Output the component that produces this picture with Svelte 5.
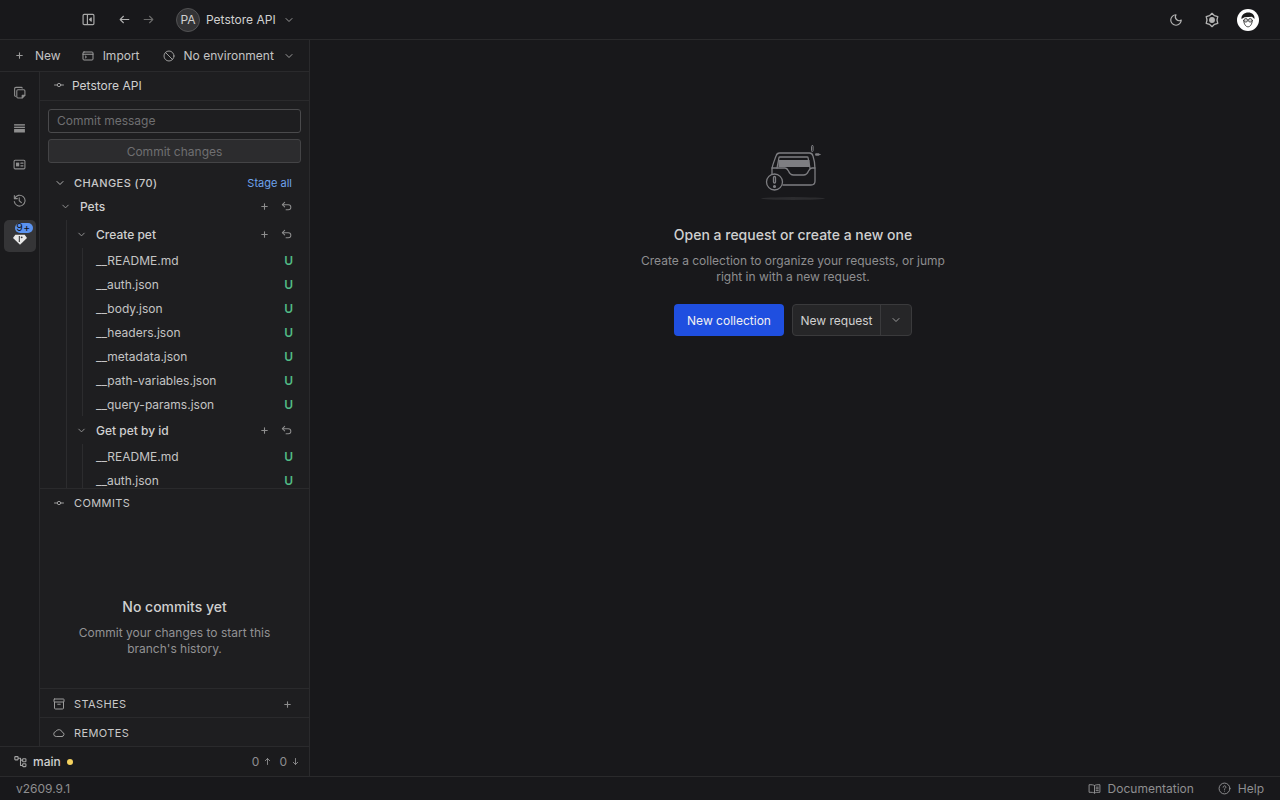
<script>
  const createPetFiles = [
    '__README.md',
    '__auth.json',
    '__body.json',
    '__headers.json',
    '__metadata.json',
    '__path-variables.json',
    '__query-params.json'
  ];
  const getPetFiles = ['__README.md', '__auth.json'];
</script>

{#snippet chevron(cls = 'chev')}
  <svg class={cls} viewBox="0 0 24 24" fill="none" stroke="currentColor" stroke-width="2" stroke-linecap="round" stroke-linejoin="round"><path d="M6 9l6 6 6-6" /></svg>
{/snippet}

{#snippet plus()}
  <svg class="act" viewBox="0 0 24 24" fill="none" stroke="currentColor" stroke-width="2.400" stroke-linecap="round"><path d="M12 6v12M6 12h12" /></svg>
{/snippet}

{#snippet undo()}
  <svg class="act" viewBox="0 0 24 24" fill="none" stroke="currentColor" stroke-width="2.200" stroke-linecap="round" stroke-linejoin="round"><path d="M8 13L3 8l5-5" /><path d="M3 8h13a5 5 0 0 1 0 11h-5" /></svg>
{/snippet}

{#snippet commitIcon()}
  <svg class="sec-icon" viewBox="0 0 24 24" fill="none" stroke="currentColor" stroke-width="2" stroke-linecap="round"><circle cx="12" cy="12" r="3.400" /><path d="M3 12h5.600M15.400 12H21" /></svg>
{/snippet}

<div class="app">
  <header class="topbar">
    <svg class="ic top-toggle" viewBox="0 0 24 24" fill="none" stroke="currentColor" stroke-width="2.200" stroke-linecap="round" stroke-linejoin="round"><rect x="2" y="2.500" width="20" height="19" rx="2" /><path d="M10 3v18" /><path d="M17 9l-3 3 3 3z" fill="currentColor" /></svg>
    <svg class="ic nav-back" viewBox="0 0 24 24" fill="none" stroke="currentColor" stroke-width="2" stroke-linecap="round" stroke-linejoin="round"><path d="M20 12H4M10 6l-6 6 6 6" /></svg>
    <svg class="ic nav-fwd" viewBox="0 0 24 24" fill="none" stroke="currentColor" stroke-width="2" stroke-linecap="round" stroke-linejoin="round"><path d="M4 12h16M14 6l6 6-6 6" /></svg>
    <span class="avatar">PA</span>
    <span class="ws-name">Petstore API</span>
    {@render chevron('chev ws-chev')}
    <div class="top-right">
      <svg class="ic" viewBox="0 0 24 24" fill="none" stroke="currentColor" stroke-width="2" stroke-linecap="round" stroke-linejoin="round"><path d="M12 3a6.500 6.500 0 0 0 9 9 9 9 0 1 1-9-9z" /></svg>
      <svg class="ic gear" viewBox="0 0 24 24" fill="none" stroke="currentColor" stroke-width="2" stroke-linejoin="round"><path d="M12 2l3.750 3.500 4.910 1.500-1.160 5 1.160 5-4.910 1.500L12 22l-3.750-3.500-4.910-1.500 1.160-5-1.160-5 4.910-1.500z" /><circle cx="12" cy="12" r="3.400" fill="currentColor" /></svg>
      <span class="user">
        <svg viewBox="0 0 22 22">
          <circle cx="11" cy="11" r="11" fill="#fff" />
          <path d="M4.500 10c-.5-4 3-6.500 6.800-6.500S18 6 17.500 10l-2.500-2.200-7.500.4z" fill="#1c1c1c" />
          <path d="M6.500 11c.8 5 2.500 6.800 4.500 6.800s3.700-1.800 4.500-6.800" fill="none" stroke="#444" stroke-width="1" />
          <circle cx="8.800" cy="11.300" r="1.800" fill="#ccc" stroke="#333" stroke-width=".8" />
          <circle cx="13.200" cy="11.300" r="1.800" fill="#ccc" stroke="#333" stroke-width=".8" />
        </svg>
      </span>
    </div>
  </header>

  <div class="body">
    <aside class="sidebar">
      <div class="toolbar">
        <span class="tool tool-new">
          <svg viewBox="0 0 24 24" fill="none" stroke="currentColor" stroke-width="2.400" stroke-linecap="round"><path d="M12 6v12M6 12h12" /></svg>
          New
        </span>
        <span class="tool tool-import">
          <svg viewBox="0 0 24 24" fill="none" stroke="currentColor" stroke-width="2" stroke-linecap="round" stroke-linejoin="round"><rect x="2" y="4" width="20" height="16" rx="2" /><path d="M2 8.500h20M6.500 12l2.500 2-2.500 2" /></svg>
          Import
        </span>
        <span class="tool tool-env">
          <svg viewBox="0 0 24 24" fill="none" stroke="currentColor" stroke-width="2" stroke-linecap="round"><circle cx="12" cy="12" r="10" /><path d="M5 5l14 14" /></svg>
          No environment
          {@render chevron('chev env-chev')}
        </span>
      </div>

      <div class="main-side">
        <nav class="rail">
          <span class="rail-item">
            <svg viewBox="0 0 24 24" fill="none" stroke="currentColor" stroke-width="2" stroke-linejoin="round"><path d="M17 4.500V4a1.500 1.500 0 0 0-1.500-1.500h-10A2.500 2.500 0 0 0 3 5v12a2 2 0 0 0 2.500 2" /><path d="M7 9a2 2 0 0 1 2-2h11a2 2 0 0 1 2 2v8l-5 5H9a2 2 0 0 1-2-2z" /><path d="M17 22v-5h5z" fill="currentColor" /></svg>
          </span>
          <span class="rail-item">
            <svg viewBox="0 0 24 24" fill="currentColor"><rect x="2" y="4" width="20" height="2.600" /><rect x="2" y="8.600" width="20" height="2.600" /><rect x="2" y="13" width="20" height="6.500" rx=".5" /></svg>
          </span>
          <span class="rail-item">
            <svg viewBox="0 0 24 24" fill="none" stroke="currentColor" stroke-width="2" stroke-linecap="round"><rect x="2" y="4" width="20" height="16" rx="2" /><rect x="5.500" y="8.500" width="6" height="7" fill="currentColor" stroke="none" /><path d="M14.500 9.500h4M14.500 14.500h4" /></svg>
          </span>
          <span class="rail-item">
            <svg viewBox="0 0 24 24" fill="none" stroke="currentColor" stroke-width="2" stroke-linecap="round" stroke-linejoin="round"><path d="M2.500 3v5.500H8" /><path d="M3 8.500A10 10 0 1 1 2.400 14" /><path d="M11.500 7v5.500l4 3.500" /></svg>
          </span>
          <span class="rail-item active">
            <svg class="git" viewBox="0 0 24 24"><path d="M12 22L1.500 12 5 7h14l3.500 5z" fill="#e8e8e8" /><path d="M11 9v9" stroke="#3a3a3a" stroke-width="1.600" /><circle cx="14.500" cy="11" r="1.400" fill="#3a3a3a" /></svg>
            <span class="badge">9+</span>
          </span>
        </nav>

        <div class="panel">
          <div class="panel-head">
            {@render commitIcon()}
            <span>Petstore API</span>
          </div>

          <div class="commit-box">
            <div class="commit-input">Commit message</div>
            <div class="commit-btn">Commit changes</div>
          </div>

          <div class="changes">
            <div class="changes-head">
              {@render chevron('chev changes-chev')}
              <span class="sec-title bold">CHANGES (70)</span>
              <span class="stage">Stage all</span>
            </div>
            <div class="tree">
              <div class="row folder lvl0">
                {@render chevron()}
                <span class="name">Pets</span>
                <span class="acts">{@render plus()}{@render undo()}</span>
              </div>
              <div class="guide guide0">
                <div class="row folder lvl1">
                  {@render chevron()}
                  <span class="name">Create pet</span>
                  <span class="acts">{@render plus()}{@render undo()}</span>
                </div>
                <div class="guide guide1">
                  {#each createPetFiles as f}
                    <div class="row file"><span class="fname">{f}</span><span class="u">U</span></div>
                  {/each}
                </div>
                <div class="row folder lvl1">
                  {@render chevron()}
                  <span class="name">Get pet by id</span>
                  <span class="acts">{@render plus()}{@render undo()}</span>
                </div>
                <div class="guide guide1">
                  {#each getPetFiles as f}
                    <div class="row file"><span class="fname">{f}</span><span class="u">U</span></div>
                  {/each}
                </div>
              </div>
            </div>
          </div>

          <div class="commits">
            <div class="sec-head">
              {@render commitIcon()}
              <span class="sec-title">COMMITS</span>
            </div>
            <div class="no-commits">
              <h3>No commits yet</h3>
              <p>Commit your changes to start this branch's history.</p>
            </div>
          </div>

          <div class="sec-head boxed">
            <svg class="sec-icon" viewBox="0 0 24 24" fill="none" stroke="currentColor" stroke-width="2" stroke-linecap="round" stroke-linejoin="round"><rect x="2" y="2" width="20" height="6" rx="1" /><path d="M3 8v12a2 2 0 0 0 2 2h14a2 2 0 0 0 2-2V8M9.500 12.500h5" /></svg>
            <span class="sec-title">STASHES</span>
            <span class="sec-plus">{@render plus()}</span>
          </div>
          <div class="sec-head boxed">
            <svg class="sec-icon" viewBox="0 0 24 24" fill="none" stroke="currentColor" stroke-width="2" stroke-linecap="round" stroke-linejoin="round"><path d="M18 19H6.500a5 5 0 0 1-1-9.900A7 7 0 0 1 18.500 10.500 4.300 4.300 0 0 1 18 19z" /></svg>
            <span class="sec-title">REMOTES</span>
          </div>
        </div>
      </div>

      <div class="branch">
        <svg class="branch-icon" viewBox="0 0 24 24" fill="none" stroke="currentColor" stroke-width="2" stroke-linejoin="round"><rect x="1.500" y="3" width="6" height="6" rx="1" /><rect x="16" y="7" width="6" height="5.500" rx="1" /><rect x="16" y="16" width="6" height="5.500" rx="1" /><path d="M7.500 6H12v13.500h4M12 9.500h4" /></svg>
        <span class="branch-name">main</span>
        <span class="dot"></span>
        <span class="sync">
          0
          <svg viewBox="0 0 24 24" fill="none" stroke="currentColor" stroke-width="2.400" stroke-linecap="round" stroke-linejoin="round"><path d="M12 20V4M6 10l6-6 6 6" /></svg>
          <span class="sync-gap">0</span>
          <svg viewBox="0 0 24 24" fill="none" stroke="currentColor" stroke-width="2.400" stroke-linecap="round" stroke-linejoin="round"><path d="M12 4v16M6 14l6 6 6-6" /></svg>
        </span>
      </div>
    </aside>

    <main class="main">
      <svg class="tray" viewBox="0 0 72 60" fill="none" stroke="#7e7e82" stroke-width="1.300" stroke-linecap="round" stroke-linejoin="round">
        <ellipse cx="36" cy="55.500" rx="32" ry="1.400" fill="#2c2c2f" stroke="none" />
        <path d="M15 32v-6c0-3 3-10 4-13 .6-2 1.500-3 3.500-3h30c2 0 3 1 3.500 3 1 3 2 8 2 13v12c0 2.500-1.500 4-4 4H26" />
        <path d="M15 25h13c2 0 2.500 1 3.500 3 1 2.500 2 4 5 4h10c3 0 4-1.500 5-4 1-2 1.500-3 3.500-3h3" />
        <path d="M20 25l2-10.500c0-.5.500-.5 1-.5h27c.5 0 1 0 1 .5l2 10.500" />
        <rect x="21.500" y="17" width="31" height="7" fill="#7e7e82" stroke="none" />
        <circle cx="17.500" cy="39" r="8" fill="#18181b" />
        <rect x="16.500" y="33.500" width="2" height="6.500" rx="1" />
        <circle cx="17.500" cy="43.500" r=".9" fill="#7e7e82" />
        <rect x="54.500" y="2.500" width="1.600" height="6" rx=".8" stroke-width="1" />
        <ellipse cx="60.500" cy="11.500" rx="2.500" ry=".8" fill="#7e7e82" stroke-width="1" />
      </svg>
      <h2>Open a request or create a new one</h2>
      <p>Create a collection to organize your requests, or jump<br />right in with a new request.</p>
      <div class="actions">
        <button class="primary">New collection</button>
        <div class="split">
          <button class="split-main">New request</button>
          <button class="split-caret">{@render chevron('chev')}</button>
        </div>
      </div>
    </main>
  </div>

  <footer class="footer">
    <span class="version">v2609.9.1</span>
    <span class="foot-link doc">
      <svg viewBox="0 0 24 24" fill="none" stroke="currentColor" stroke-width="1.800" stroke-linecap="round" stroke-linejoin="round"><path d="M12 6.500C10 5 7 5 2 5v14c5 0 8 0 10 1.500 2-1.500 5-1.500 10-1.500V5c-5 0-8 0-10 1.500zM12 6.500v14M15 9.500h4M15 12.500h4M15 15.500h4" /></svg>
      Documentation
    </span>
    <span class="foot-link">
      <svg viewBox="0 0 24 24" fill="none" stroke="currentColor" stroke-width="1.800" stroke-linecap="round" stroke-linejoin="round"><circle cx="12" cy="12" r="10" /><path d="M9.500 9.500a2.500 2.500 0 1 1 3.800 2.100c-.8.500-1.300 1-1.300 2" /><path d="M12 16.800v.1" /></svg>
      Help
    </span>
  </footer>
</div>

<style>
  :global(body) {
    margin: 0;
    background: #18181b;
  }
  .app {
    width: 1280px;
    height: 800px;
    display: flex;
    flex-direction: column;
    overflow: hidden;
    background: #18181b;
    color: #d0d0d0;
    font-family: Inter, "Noto Sans", sans-serif;
    font-size: 12px;
  }
  svg { display: block; flex-shrink: 0; }

  .topbar {
    height: 39px;
    flex-shrink: 0;
    display: flex;
    align-items: center;
    padding-left: 82px;
    border-bottom: 1px solid #2a2a2c;
  }
  .ic { width: 13px; height: 13px; color: #a8a8a8; }
  .nav-back { margin-left: 23px; color: #b0b0b0; }
  .nav-fwd { margin-left: 11px; color: #6a6a6a; }
  .avatar {
    margin-left: 21px;
    margin-right: 6px;
    width: 22px;
    height: 22px;
    border-radius: 50%;
    background: #333335;
    border: 1px solid #525254;
    display: flex;
    align-items: center;
    justify-content: center;
    font-size: 12px;
    color: #cfcfcf;
  }
  .ws-name { color: #d0d0d0; }
  .chev { width: 12px; height: 12px; color: #9a9a9a; }
  :global(.ws-chev) { margin-left: 7px; }
  .top-right {
    margin-left: auto;
    margin-right: 21px;
    display: flex;
    align-items: center;
  }
  .top-right .ic { width: 14px; height: 14px; color: #b4b4b4; }
  .top-right .gear { width: 16px; height: 16px; margin-left: 21px; }
  .user { width: 22px; height: 22px; margin-left: 17px; }
  .user svg { width: 22px; height: 22px; }

  .body { flex: 1; min-height: 0; display: flex; }

  .sidebar {
    width: 309px;
    flex-shrink: 0;
    display: flex;
    flex-direction: column;
    background: #1b1b1d;
    border-right: 1px solid #2a2a2c;
  }
  .toolbar {
    height: 31px;
    flex-shrink: 0;
    display: flex;
    align-items: center;
    border-bottom: 1px solid #2a2a2c;
    color: #c4c4c4;
    white-space: nowrap;
  }
  .tool { display: flex; align-items: center; }
  .tool svg { width: 12px; height: 12px; color: #9c9c9c; }
  .tool-new { margin-left: 14px; gap: 10px; }
  .tool-new svg { width: 11px; height: 11px; }
  .tool-import { margin-left: 21px; gap: 9px; }
  .tool-env { margin-left: 23px; gap: 9px; }

  .main-side { flex: 1; min-height: 0; display: flex; }
  .rail {
    width: 39px;
    flex-shrink: 0;
    border-right: 1px solid #2a2a2c;
    display: flex;
    flex-direction: column;
    align-items: center;
    padding-top: 4px;
    gap: 4px;
  }
  .rail-item {
    width: 32px;
    height: 32px;
    border-radius: 5px;
    display: flex;
    align-items: center;
    justify-content: center;
    color: #8e8e8e;
    position: relative;
  }
  .rail-item svg { width: 13px; height: 13px; }
  .rail-item.active { background: #353537; color: #eee; }
  .rail-item .git { width: 16px; height: 16px; margin-top: 3px; }
  .badge {
    position: absolute;
    top: 3px;
    left: 11px;
    width: 18px;
    height: 10px;
    border-radius: 5px;
    background: #5b93ef;
    color: #111;
    font-size: 10.500px;
    line-height: 10px;
    text-align: center;
    letter-spacing: .5px;
  }

  .panel {
    flex: 1;
    min-width: 0;
    display: flex;
    flex-direction: column;
    background: #1e1e20;
  }
  .panel-head {
    height: 26px;
    padding: 0 0 2px 13px;
    flex-shrink: 0;
    display: flex;
    align-items: center;
    gap: 7px;
    border-bottom: 1px solid #2a2a2c;
    color: #d0d0d0;
  }
  .sec-icon { width: 12px; height: 12px; color: #9c9c9c; }
  .commit-box {
    padding: 8px 8px 0;
    display: flex;
    flex-direction: column;
    gap: 6px;
    flex-shrink: 0;
  }
  .commit-input {
    height: 22px;
    border: 1px solid #4a4a4c;
    border-radius: 3px;
    padding-left: 8px;
    line-height: 22px;
    color: #6f6f71;
  }
  .commit-btn {
    height: 22px;
    border: 1px solid #444446;
    border-radius: 3px;
    background: #2c2c2e;
    text-align: center;
    line-height: 24px;
    color: #6f6f71;
  }

  .changes {
    height: 325px;
    overflow: hidden;
    flex-shrink: 0;
  }
  .changes-head {
    display: flex;
    align-items: center;
    padding: 10px 17px 0 14px;
    height: 19px;
  }
  .changes-head :global(.changes-chev) { margin-right: 8px; color: #b0b0b0; }
  .sec-title {
    font-size: 11px;
    letter-spacing: .4px;
    color: #c8c8c8;
  }
  .sec-title.bold { font-weight: 500; }
  .stage { margin-left: auto; font-size: 11px; color: #6ea3ee; }

  .row {
    display: flex;
    align-items: center;
    padding-right: 17px;
  }
  .folder { height: 28px; }
  .folder .name { font-weight: 500; color: #d0d0d0; }
  .folder :global(.chev) { width: 11px; height: 11px; margin-right: 9px; }
  .lvl0 { padding-left: 20px; }
  .lvl1 { padding-left: 36px; }
  .acts { margin-left: auto; display: flex; gap: 11px; }
  .act { width: 11px; height: 11px; color: #8e8e8e; }
  .guide { position: relative; }
  .guide0::before,
  .guide1::before {
    content: "";
    position: absolute;
    top: 0;
    bottom: 0;
    width: 1px;
    background: #2c2c2e;
  }
  .guide0::before { left: 26px; }
  .guide1::before { left: 42px; }
  .file { height: 24px; padding-left: 56px; padding-right: 16px; color: #c4c4c4; }
  .u { margin-left: auto; font-weight: 600; color: #52bb85; }

  .commits {
    flex: 1;
    min-height: 0;
    display: flex;
    flex-direction: column;
    border-top: 1px solid #2a2a2c;
  }
  .sec-head {
    height: 28px;
    flex-shrink: 0;
    display: flex;
    align-items: center;
    padding: 0 16px 0 13px;
    gap: 9px;
  }
  .boxed {
    height: 29px;
    box-sizing: border-box;
    padding-top: 2px;
    border-top: 1px solid #2a2a2c;
  }
  .sec-plus { margin-left: auto; }
  .no-commits {
    flex: 1;
    display: flex;
    flex-direction: column;
    align-items: center;
    padding-top: 81px;
    text-align: center;
  }
  .no-commits h3 {
    margin: 0 0 10px;
    font-size: 14px;
    font-weight: 500;
    color: #d0d0d0;
  }
  .no-commits p {
    margin: 0;
    width: 220px;
    line-height: 16px;
    color: #929294;
  }

  .branch {
    height: 29px;
    flex-shrink: 0;
    display: flex;
    align-items: center;
    border-top: 1px solid #2a2a2c;
    padding: 0 9px 0 14px;
    background: #1b1b1d;
  }
  .branch-icon { width: 13px; height: 13px; color: #a4a4a4; }
  .branch-name { margin-left: 6px; font-weight: 500; color: #d0d0d0; }
  .dot { width: 6px; height: 6px; border-radius: 50%; background: #f5d25f; margin-left: 6px; }
  .sync { margin-left: auto; display: flex; align-items: center; gap: 4px; color: #8e8e90; }
  .sync svg { width: 9px; height: 9px; }
  .sync-gap { margin-left: 3px; }

  .main {
    flex: 1;
    min-width: 0;
    display: flex;
    flex-direction: column;
    align-items: center;
    padding: 103px 4px 0 0;
    background: #18181b;
  }
  .tray { width: 72px; height: 60px; }
  .main h2 {
    margin: 22px 0 0;
    font-size: 14px;
    line-height: 20px;
    font-weight: 500;
    color: #d0d0d0;
  }
  .main p {
    margin: 8px 0 0;
    line-height: 16px;
    color: #8e8e90;
    text-align: center;
  }
  .actions { display: flex; margin-top: 19px; gap: 8px; }
  button {
    font: inherit;
    height: 32px;
    border: 0;
    cursor: pointer;
  }
  .primary {
    width: 110px;
    background: #1f4fe0;
    color: #f2f2f2;
    border-radius: 4px;
  }
  .split {
    display: flex;
    border: 1px solid #3a3a3c;
    border-radius: 4px;
    background: #262628;
    box-sizing: border-box;
    height: 32px;
  }
  .split-main {
    height: 30px;
    width: 88px;
    background: none;
    color: #d0d0d0;
    border-right: 1px solid #3a3a3c;
    padding: 0;
  }
  .split-caret {
    height: 30px;
    width: 30px;
    background: none;
    display: flex;
    align-items: center;
    justify-content: center;
    padding: 0;
  }

  .footer {
    height: 23px;
    flex-shrink: 0;
    display: flex;
    align-items: center;
    padding: 0 16px;
    border-top: 1px solid #2a2a2c;
    color: #8e8e90;
  }
  .version { margin-right: auto; }
  .foot-link { display: flex; align-items: center; gap: 7px; }
  .foot-link svg { width: 13px; height: 13px; }
  .doc { margin-right: 24px; }
</style>
